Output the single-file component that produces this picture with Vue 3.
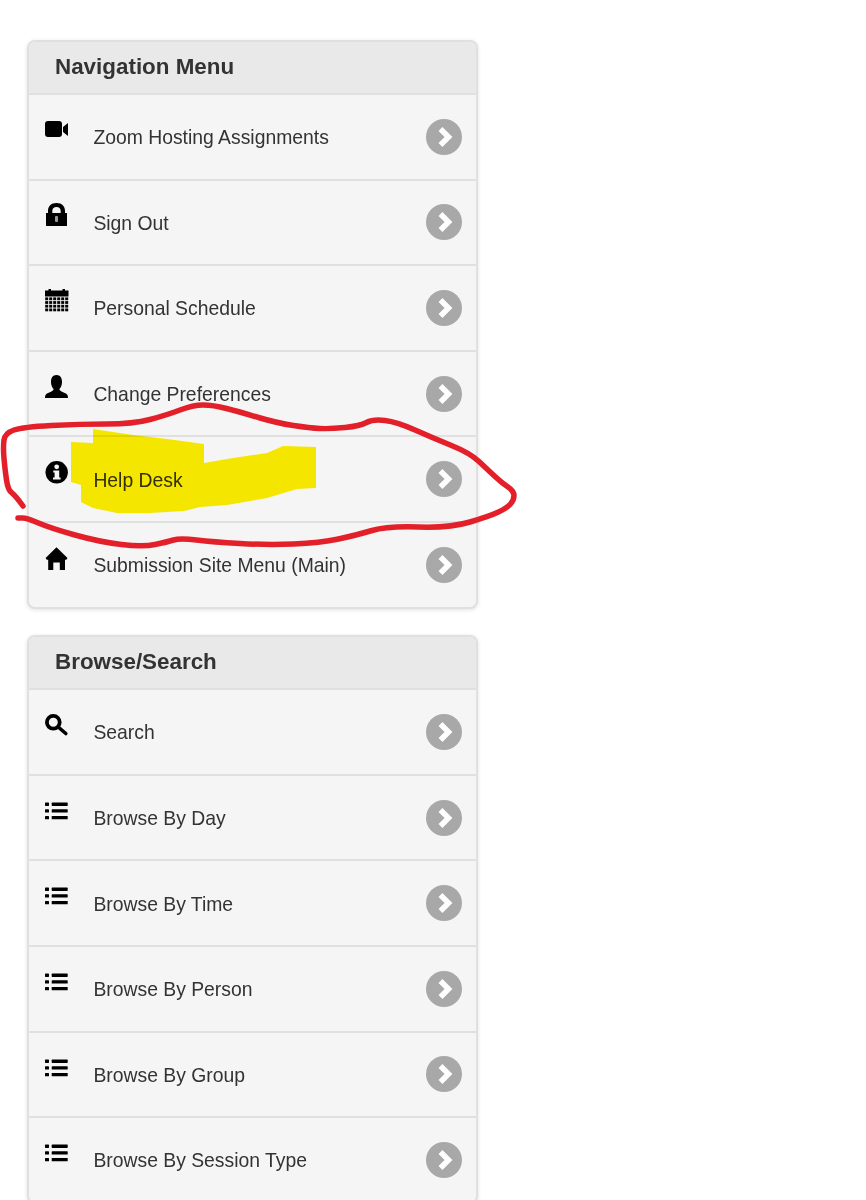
<script setup>
const panels = [
  {
    title: 'Navigation Menu',
    items: [
      { label: 'Zoom Hosting Assignments', icon: 'video' },
      { label: 'Sign Out', icon: 'lock' },
      { label: 'Personal Schedule', icon: 'calendar' },
      { label: 'Change Preferences', icon: 'user' },
      { label: 'Help Desk', icon: 'info' },
      { label: 'Submission Site Menu (Main)', icon: 'home' }
    ]
  },
  {
    title: 'Browse/Search',
    items: [
      { label: 'Search', icon: 'search' },
      { label: 'Browse By Day', icon: 'list' },
      { label: 'Browse By Time', icon: 'list' },
      { label: 'Browse By Person', icon: 'list' },
      { label: 'Browse By Group', icon: 'list' },
      { label: 'Browse By Session Type', icon: 'list' }
    ]
  }
]

// calendar cells
const calCells = []
for (let r = 0; r < 4; r++) {
  for (let c = 0; c < 6; c++) {
    calCells.push({ x: 0.2 + c * 4, y: 9.4 + r * 3.7 })
  }
}

const listRows = [4.6, 11.3, 18]

// hand-drawn marker loop, traced from the picture
const loop = [
  [23, 506], [15, 495], [8, 490], [5, 470], [3, 447], [5, 433], [23, 427], [80, 424], [133, 424],
  [167, 415], [193, 405], [213, 405], [240, 412], [277, 423], [310, 428], [330, 429], [360, 426],
  [373, 419], [397, 422], [433, 438], [470, 453], [488, 470], [502, 483], [514, 491], [514, 500],
  [507, 508], [490, 516], [450, 528], [387, 526], [357, 535], [320, 543], [267, 545], [213, 542],
  [180, 538], [167, 542], [143, 547], [100, 542], [50, 528], [27, 518], [18, 518]
]

function smooth(points) {
  let d = `M${points[0][0]} ${points[0][1]}`
  for (let i = 1; i < points.length - 1; i++) {
    const mx = (points[i][0] + points[i + 1][0]) / 2
    const my = (points[i][1] + points[i + 1][1]) / 2
    d += ` Q${points[i][0]} ${points[i][1]} ${mx} ${my}`
  }
  const last = points[points.length - 1]
  return d + ` L${last[0]} ${last[1]}`
}

const loopPath = smooth(loop)
const highlight =
  'M93 429 L133 435 L167 439 L204 444 L204 463 L233 458 L267 453 L283 446 L316 447 L316 488 L297 489 L267 498 L227 505 L200 507 L184 511 L150 513 L117 513 L93 508 L81 502 L81 485 L71 482 L71 442 L93 443 Z'
</script>

<template>
  <div class="page">
    <section v-for="panel in panels" :key="panel.title" class="panel">
      <h2 class="panel-title">{{ panel.title }}</h2>
      <a v-for="item in panel.items" :key="item.label" class="row">
        <svg class="icon" viewBox="0 0 24 24" width="24" height="24">
          <g v-if="item.icon === 'video'">
            <rect x="0" y="4" width="17" height="16" rx="3" />
            <path d="M18 10 L23 6 V19 L18 15 Z" />
          </g>
          <g v-else-if="item.icon === 'lock'">
            <path fill-rule="evenodd" d="M11.5 0 C6 0 3 3.5 3 8 V10 H1 V23 H22 V10 H20 V8 C20 3.5 17 0 11.5 0 Z M11.5 4 C14 4 15.7 5.5 15.7 8 V10 H7.3 V8 C7.3 5.5 9 4 11.5 4 Z" />
            <rect x="10" y="13" width="3" height="6" rx="1" fill="#999" />
          </g>
          <g v-else-if="item.icon === 'calendar'">
            <path d="M0 2.5 H3.5 V1 H6 V2.5 H17.5 V1 H20 V2.5 H23.5 V8.6 H0 Z" />
            <rect v-for="(c, i) in calCells" :key="i" :x="c.x" :y="c.y" width="3" height="2.8" />
          </g>
          <g v-else-if="item.icon === 'user'">
            <path d="M11.5 1 C7.5 1 6 4 6 8 C6 11 7 13.5 8.6 15 C8.6 17 5 18 2 19.5 C0.8 20.2 0 21.5 0 24 H23 C23 21.5 22.2 20.2 21 19.5 C18 18 14.4 17 14.4 15 C16 13.5 17 11 17 8 C17 4 15.5 1 11.5 1 Z" />
          </g>
          <g v-else-if="item.icon === 'info'">
            <circle cx="11.7" cy="13.3" r="11.2" />
            <circle cx="11.7" cy="7.8" r="2.4" fill="#f5f5f5" />
            <path d="M8.3 11.4 H14.2 V18.4 H15.6 V20.6 H8 V18.4 H9.6 V13.4 H8.3 Z" fill="#f5f5f5" />
          </g>
          <g v-else-if="item.icon === 'home'">
            <path d="M11.5 2.3 L22.5 13 L21.3 14.8 H20 V25 H14.8 V17.5 H8.3 V25 H3.2 V14.8 H1.8 L0.6 13 Z" />
          </g>
          <g v-else-if="item.icon === 'search'">
            <circle cx="8.3" cy="10.3" r="6.4" fill="none" stroke="#000" stroke-width="3.8" />
            <path d="M13.8 15.5 L20.8 21.5" stroke="#000" stroke-width="3.6" stroke-linecap="round" />
          </g>
          <g v-else>
            <g v-for="y in listRows" :key="y">
              <rect x="0" :y="y" width="4" height="3.3" rx="0.6" />
              <rect x="6.7" :y="y" width="16" height="3.3" rx="0.6" />
            </g>
          </g>
        </svg>
        <span class="label">{{ item.label }}</span>
        <span class="go">
          <svg viewBox="0 0 36 36" width="36" height="36">
            <path d="M14.5 10 L22.5 18 L14.5 26" fill="none" stroke="#fff" stroke-width="5.5" />
          </svg>
        </span>
      </a>
    </section>

    <!-- marker scribbles on top of the screenshot -->
    <svg class="scribble" viewBox="0 0 866 1200" width="866" height="1200">
      <path class="highlight" :d="highlight" />
      <path class="loop" :d="loopPath" />
    </svg>
  </div>
</template>

<style scoped>
.page {
  position: relative;
  height: 1200px;
  overflow: hidden;
  padding: 40px 0 0 27px;
  box-sizing: border-box;
  background: #fff;
  font-family: "Liberation Sans", Arial, sans-serif;
}

.panel {
  width: 451px;
  box-sizing: border-box;
  margin-bottom: 26.6px;
  border: 2px solid #e0e0e0;
  border-radius: 8px;
  background: #f5f5f5;
  box-shadow: 0 1px 4px rgba(0, 0, 0, 0.12);
  overflow: hidden;
}

.panel-title {
  margin: 0;
  height: 51px;
  box-sizing: border-box;
  padding-left: 26px;
  line-height: 50px;
  font-size: 22.4px;
  font-weight: bold;
  color: #333;
  background: #e9e9e9;
}

.row {
  display: flex;
  align-items: center;
  height: 85.6px;
  box-sizing: border-box;
  border-top: 2px solid #e0e0e0;
  padding: 0 14px 0 16px;
  color: #333;
}

.icon {
  flex: none;
  align-self: flex-start;
  margin-top: 22px;
  fill: #000;
  overflow: visible;
}

.label {
  flex: 1;
  margin: 2px 0 0 24.4px;
  font-size: 19.35px;
}

.go {
  flex: none;
  width: 36px;
  height: 36px;
  border-radius: 50%;
  background: #a8a8a8;
}

.go svg {
  display: block;
}

.scribble {
  position: absolute;
  left: 0;
  top: 0;
  pointer-events: none;
}

.highlight {
  fill: #fff000;
  mix-blend-mode: multiply;
}

.loop {
  fill: none;
  stroke: #e3202a;
  stroke-width: 5.5;
  stroke-linecap: round;
  stroke-linejoin: round;
}
</style>
